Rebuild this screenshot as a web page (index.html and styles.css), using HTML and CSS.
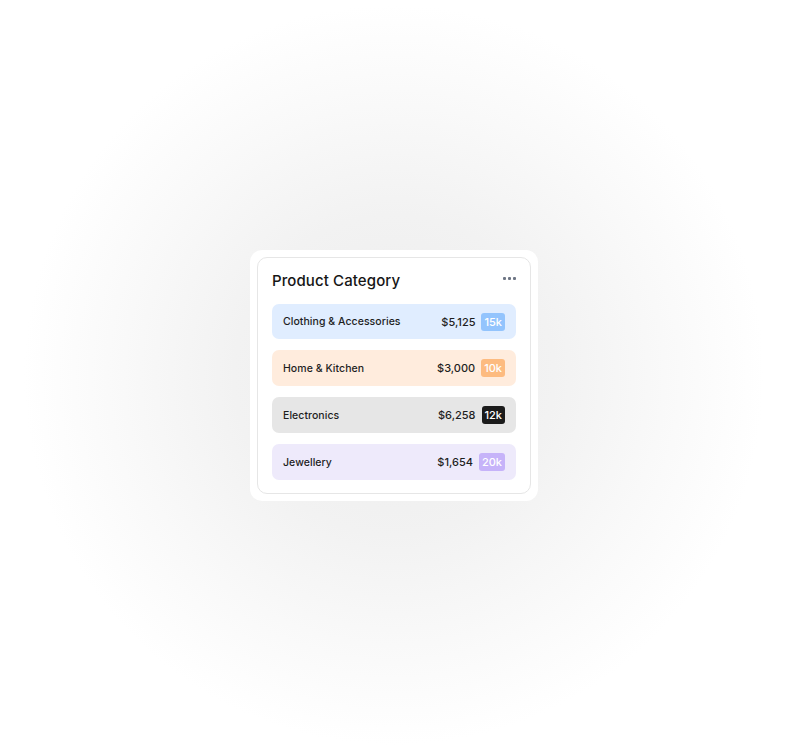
FILE: index.html
```html
<!DOCTYPE html>
<html>
<head>
<meta charset="utf-8">
<link rel="stylesheet" href="styles.css">
</head>
<body>
<div class="stage">
  <div class="frame">
    <div class="card">
      <div class="head">
        <h2 class="title">Product Category</h2>
        <span class="more"><i></i><i></i><i></i></span>
      </div>
      <div class="list">
        <div class="row blue"><span class="name">Clothing &amp; Accessories</span><span class="right"><span class="amt">$5,125</span><span class="badge">15k</span></span></div>
        <div class="row orange"><span class="name">Home &amp; Kitchen</span><span class="right"><span class="amt">$3,000</span><span class="badge">10k</span></span></div>
        <div class="row gray"><span class="name">Electronics</span><span class="right"><span class="amt">$6,258</span><span class="badge">12k</span></span></div>
        <div class="row purple"><span class="name">Jewellery</span><span class="right"><span class="amt">$1,654</span><span class="badge">20k</span></span></div>
      </div>
    </div>
  </div>
</div>
</body>
</html>
```
FILE: styles.css
```css
html, body { margin: 0; padding: 0; }
body {
  width: 788px; height: 751px;
  font-family: Inter, "Noto Sans", sans-serif;
  color: #1a1a1a;
  background: radial-gradient(circle at 394px 375px, #ececec 0px, #f2f2f2 160px, #f9f9f9 270px, #ffffff 370px);
}
.stage {
  width: 788px; height: 751px;
  display: flex; align-items: center; justify-content: center;
}
.frame {
  background: #fff;
  border-radius: 12px;
  padding: 7px;
}
.card {
  width: 244px;
  border: 1px solid #e6e6e6;
  border-radius: 10px;
  padding: 13px 14px 13px 14px;
}
.head { display: flex; justify-content: space-between; align-items: flex-start; height: 20px; }
.title { margin: 0; font-size: 15px; font-weight: 500; line-height: 20px; letter-spacing: 0.1px; color: #161616; }
.more { display: flex; gap: 2px; margin-top: 6px; margin-right: 0px; }
.more i { width: 3px; height: 3px; background: #6e7685; border-radius: 1px; display: block; }
.list { display: flex; flex-direction: column; gap: 11px; margin-top: 13px; }
.row {
  height: 35px; border-radius: 7px;
  display: flex; align-items: center; justify-content: space-between;
  padding: 0 11px 0 11px;
  font-size: 10.5px; font-weight: 500;
}
.row + .row { height: 36px; }
.name { letter-spacing: 0.05px; color: #1e1e1e; }
.right { display: flex; align-items: center; gap: 6px; }
.amt { font-size: 11px; font-weight: 500; color: #1e1e1e; }
.badge {
  height: 18px; padding: 0 3px; border-radius: 3px;
  display: flex; align-items: center; justify-content: center;
  color: #fff; font-size: 11px; font-weight: 500; min-width: 17px;
}
.blue { background: #e0edff; }
.blue .badge { background: #93c4fd; }
.orange { background: #ffecdd; }
.orange .badge { background: #fdbb80; }
.gray { background: #e6e6e6; }
.gray .badge { background: #1b1b1b; }
.purple { background: #eeeafb; }
.purple .badge { background: #c6b3f9; }
```
